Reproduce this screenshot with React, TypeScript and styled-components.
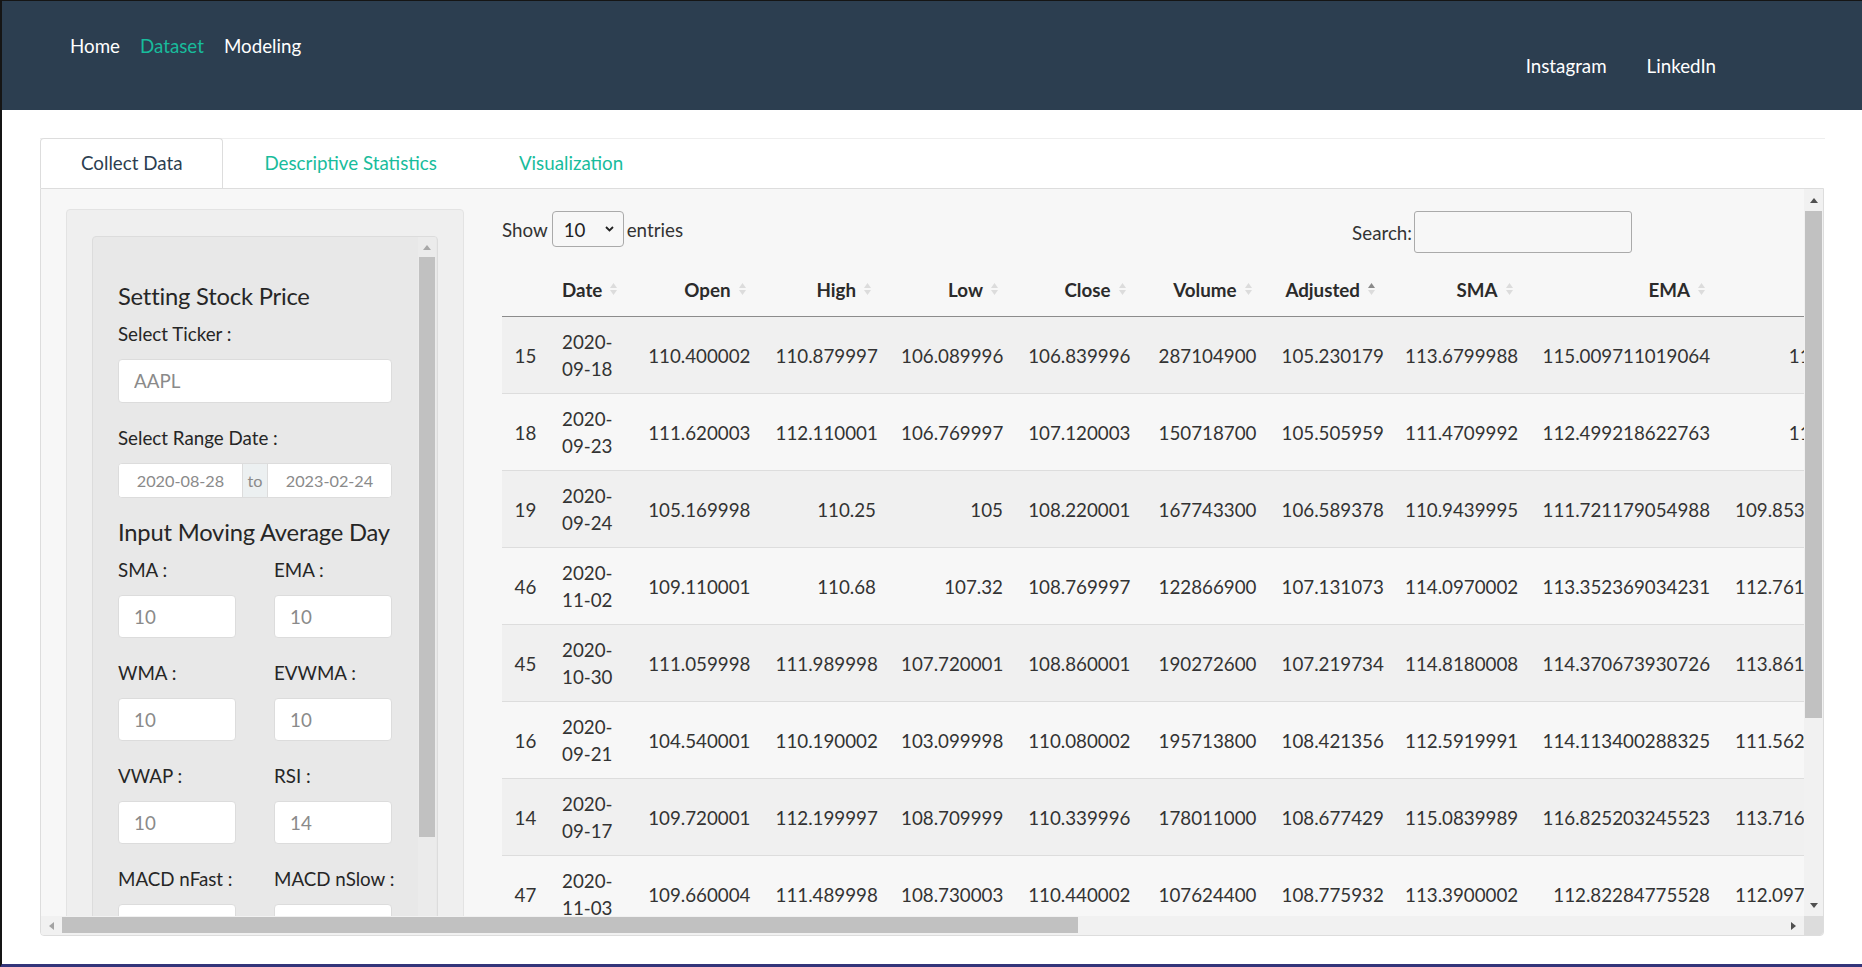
import * as React from "react";
import styled, { createGlobalStyle, css } from "styled-components";

const GlobalStyle = createGlobalStyle`
  html, body {
    margin: 0;
    padding: 0;
    background: #fff;
  }
  * {
    box-sizing: border-box;
  }
`;

const Frame = styled.div`
  width: 1862px;
  height: 967px;
  overflow: hidden;
  display: flex;
  flex-direction: column;
  background: #fff;
  border-left: 2px solid #151515;
  border-top: 1px solid #151515;
  border-bottom: 3px solid #34357a;
  font-family: Lato, "Open Sans", sans-serif;
  font-size: 18.75px;
  color: #333;
`;

const NavBar = styled.nav`
  height: 109px;
  flex-shrink: 0;
  background: #2c3e50;
  display: flex;
  justify-content: space-between;
  align-items: flex-start;
  padding: 0 126px 0 58px;
`;

const NavGroup = styled.div<{ $top: number }>`
  display: flex;
  padding-top: ${p => p.$top}px;
`;

const NavLink = styled.a<{ $active?: boolean; $pad: number }>`
  padding: 0 ${p => p.$pad}px;
  line-height: 27px;
  color: #fff;
  text-decoration: none;
  ${p =>
    p.$active &&
    css`
      color: #18bc9c;
    `}
`;

const Main = styled.main`
  padding: 0 37px 0 38px;
`;

const TabBar = styled.div`
  margin-top: 28px;
  height: 50px;
  border-top: 1px solid #eee;
  display: flex;
`;

const Tab = styled.div<{ $active?: boolean }>`
  height: 50px;
  margin-top: -1px;
  padding: 0 40px 2px;
  display: flex;
  align-items: center;
  border: 1px solid transparent;
  border-bottom: none;
  border-radius: 4px 4px 0 0;
  color: #18bc9c;
  ${p =>
    p.$active &&
    css`
      color: #2c3e50;
      background: #fff;
      border-color: #ddd;
    `}
`;

const Panel = styled.div`
  width: 1784px;
  height: 748px;
  border: 1px solid #ddd;
  border-radius: 0 0 4px 4px;
  background: #f7f7f7;
  display: flex;
  flex-direction: column;
  overflow: hidden;
`;

const ScrollArea = styled.div`
  display: flex;
  height: 727px;
`;

const Viewport = styled.div`
  flex: 1;
  overflow: hidden;
  display: flex;
  align-items: flex-start;
`;

/* ---------- drawn scrollbars ---------- */

const VBar = styled.div<{ $w: number; $track: string }>`
  width: ${p => p.$w}px;
  flex-shrink: 0;
  display: flex;
  flex-direction: column;
  background: ${p => p.$track};
`;

const HBar = styled.div`
  height: 19px;
  display: flex;
  background: #f1f1f1;
`;

const ArrowBox = styled.div<{ $w?: number; $h?: number }>`
  flex-shrink: 0;
  width: ${p => (p.$w ? `${p.$w}px` : "auto")};
  height: ${p => (p.$h ? `${p.$h}px` : "auto")};
  display: flex;
  align-items: center;
  justify-content: center;
`;

const VThumb = styled.div<{ $h: number }>`
  height: ${p => p.$h}px;
  margin: 0 1px;
  background: #c1c1c1;
`;

const HThumb = styled.div<{ $w: number }>`
  width: ${p => p.$w}px;
  margin: 1px 0 2px;
  background: #c1c1c1;
`;

const HTrack = styled.div`
  flex: 1;
  display: flex;
`;

const Corner = styled.div`
  width: 19px;
  background: #dcdcdc;
`;

const Arrow: React.FC<{ dir: "up" | "down" | "left" | "right"; color: string }> = ({ dir, color }) => {
  const pts = {
    up: "0,5 4,0 8,5",
    down: "0,0 8,0 4,5",
    left: "5,0 5,8 0,4",
    right: "0,0 5,4 0,8",
  }[dir];
  const horiz = dir === "left" || dir === "right";
  return (
    <svg width={horiz ? 5 : 8} height={horiz ? 8 : 5} viewBox={horiz ? "0 0 5 8" : "0 0 8 5"}>
      <polygon points={pts} fill={color} />
    </svg>
  );
};

/* ---------- sidebar ---------- */

const SideCol = styled.div`
  flex-shrink: 0;
  padding: 20px 0 0 25px;
`;

const Well = styled.div`
  width: 398px;
  padding: 26px 25px 40px;
  background: #efefef;
  border: 1px solid #e3e3e3;
  border-radius: 4px;
`;

const InnerBox = styled.div`
  height: 760px;
  display: flex;
  background: #e8e8e8;
  border: 1px solid #dcdcdc;
  border-radius: 4px;
  overflow: hidden;
`;

const Form = styled.div`
  width: 274px;
  flex-shrink: 0;
  margin: 0 26px 0 25px;
  padding-top: 46px;
`;

const SideHeading = styled.h4`
  margin: 0 0 11px;
  font-size: 23.75px;
  line-height: 26px;
  font-weight: 400;
  color: #262626;
  white-space: nowrap;
  letter-spacing: -0.2px;
`;

const FormGroup = styled.div`
  margin-bottom: 21.5px;
`;

const Label = styled.label`
  display: block;
  margin-bottom: 11.5px;
  line-height: 27px;
  color: #262626;
  white-space: nowrap;
`;

const TextInput = styled.input`
  display: block;
  width: 100%;
  height: 44px;
  padding: 0 15px;
  font: inherit;
  color: #8a8a8a;
  background: #fff;
  border: 1px solid #dcdcdc;
  border-radius: 4px;
  outline: none;
`;

const NumGrid = styled.div`
  display: grid;
  grid-template-columns: 118px 118px;
  column-gap: 38px;
`;

const NumInput = styled(TextInput)`
  height: 43px;
`;

const RangeBox = styled.div`
  display: flex;
  height: 35px;
  border-radius: 4px;
  overflow: hidden;
  border: 1px solid #dcdcdc;
  background: #fff;
`;

const DateInput = styled.input`
  flex: 1;
  min-width: 0;
  border: none;
  padding: 0;
  font: inherit;
  font-size: 16.25px;
  color: #8a8a8a;
  text-align: center;
  background: #fff;
  outline: none;
`;

const RangeAddon = styled.span`
  width: 26px;
  display: flex;
  align-items: center;
  justify-content: center;
  font-size: 16.25px;
  color: #8a8a8a;
  background: #ecf0f1;
  border-left: 1px solid #dcdcdc;
  border-right: 1px solid #dcdcdc;
`;

/* ---------- table ---------- */

const TableCol = styled.div`
  flex-shrink: 0;
  margin-left: 38px;
  padding-top: 22px;
`;

const Controls = styled.div`
  width: 1130px;
  height: 42px;
  display: flex;
  justify-content: space-between;
  align-items: flex-start;
`;

const Ctl = styled.div<{ $h: number }>`
  height: ${p => p.$h}px;
  display: flex;
  align-items: center;
`;

const LengthSelect = styled.div`
  width: 72px;
  height: 36px;
  margin: 0 3px 0 4px;
  padding: 0 9px 0 11px;
  display: flex;
  align-items: center;
  justify-content: space-between;
  border: 1px solid #aaa;
  border-radius: 4px;
  color: #222;
`;

const SearchBox = styled.div`
  width: 218px;
  height: 42px;
  margin-left: 2px;
  border: 1px solid #aaa;
  border-radius: 3px;
`;

const Table = styled.table<{ $width: number }>`
  margin-top: 13px;
  width: ${p => p.$width}px;
  table-layout: fixed;
  border-collapse: collapse;
`;

const Th = styled.th<{ $left?: boolean }>`
  padding: 9.5px 12.5px 13.5px;
  line-height: 27px;
  font-weight: 700;
  color: #2b2b2b;
  text-align: ${p => (p.$left ? "left" : "right")};
  border-bottom: 1px solid #8c8c8c;
  white-space: nowrap;
`;

const HeadInner = styled.span`
  display: inline-flex;
  align-items: center;
`;

const SortIcon = styled.svg`
  margin: 0 5px 0 8px;
  flex-shrink: 0;
`;

const Row = styled.tr<{ $striped: boolean }>`
  background: ${p => (p.$striped ? "#f0f0f0" : "transparent")};
  & + & {
    border-top: 1px solid #ddd;
  }
`;

const Td = styled.td<{ $left?: boolean }>`
  padding: 11px 12.5px;
  line-height: 27px;
  vertical-align: middle;
  text-align: ${p => (p.$left ? "left" : "right")};
  color: #333;
  white-space: ${p => (p.$left ? "normal" : "nowrap")};
`;

const Sort: React.FC<{ asc?: boolean }> = ({ asc }) => (
  <SortIcon width="7" height="14" viewBox="0 0 7 14">
    <polygon points="0,6 3.5,1 7,6" fill={asc ? "#8a8a8a" : "#dcdcdc"} />
    <polygon points="0,8 7,8 3.5,13" fill="#dcdcdc" />
  </SortIcon>
);

const columns: { name: string; width: number; left?: boolean; asc?: boolean }[] = [
  { name: "", width: 47.5, left: true },
  { name: "Date", width: 85, left: true },
  { name: "Open", width: 128.5 },
  { name: "High", width: 125.5 },
  { name: "Low", width: 127 },
  { name: "Close", width: 127.5 },
  { name: "Volume", width: 126 },
  { name: "Adjusted", width: 123.5, asc: true },
  { name: "SMA", width: 137.5 },
  { name: "EMA", width: 192.5 },
  { name: "WMA", width: 192 },
  { name: "EVWMA", width: 192 },
  { name: "VWAP", width: 150 },
  { name: "RSI", width: 150 },
];

const rows: string[][] = [
  ["15", "2020-09-18", "110.400002", "110.879997", "106.089996", "106.839996", "287104900", "105.230179", "113.6799988", "115.009711019064", "114.0636364", "114.391826194871", "111.205716", "38.4110252"],
  ["18", "2020-09-23", "111.620003", "112.110001", "106.769997", "107.120003", "150718700", "105.505959", "111.4709992", "112.499218622763", "112.7218182", "112.903712098127", "110.487105", "39.1284402"],
  ["19", "2020-09-24", "105.169998", "110.25", "105", "108.220001", "167743300", "106.589378", "110.9439995", "111.721179054988", "109.853454545455", "111.190275160023", "110.230142", "42.0159936"],
  ["46", "2020-11-02", "109.110001", "110.68", "107.32", "108.769997", "122866900", "107.131073", "114.0970002", "113.352369034231", "112.761090909091", "113.870046813215", "113.498014", "40.4487701"],
  ["45", "2020-10-30", "111.059998", "111.989998", "107.720001", "108.860001", "190272600", "107.219734", "114.8180008", "114.370673930726", "113.861454545455", "114.569710932118", "113.881075", "40.6715539"],
  ["16", "2020-09-21", "104.540001", "110.190002", "103.099998", "110.080002", "195713800", "108.421356", "112.5919991", "114.113400288325", "111.562181818182", "112.870127442016", "110.873510", "42.6401953"],
  ["14", "2020-09-17", "109.720001", "112.199997", "108.709999", "110.339996", "178011000", "108.677429", "115.0839989", "116.825203245523", "113.716363636364", "115.932115602849", "112.034408", "41.2279640"],
  ["47", "2020-11-03", "109.660004", "111.489998", "108.730003", "110.440002", "107624400", "108.775932", "113.3900002", "112.82284775528", "112.097454545455", "113.118502207611", "112.951037", "44.3302614"],
];

const tableWidth = columns.reduce((s, c) => s + c.width, 0);

const App: React.FC = () => {
  return (
    <>
      <GlobalStyle />
      <Frame>
        <NavBar>
          <NavGroup $top={30.5}>
            <NavLink $pad={10}>Home</NavLink>
            <NavLink $pad={10} $active>
              Dataset
            </NavLink>
            <NavLink $pad={10}>Modeling</NavLink>
          </NavGroup>
          <NavGroup $top={50.5}>
            <NavLink $pad={20}>Instagram</NavLink>
            <NavLink $pad={20}>LinkedIn</NavLink>
          </NavGroup>
        </NavBar>

        <Main>
          <TabBar>
            <Tab $active>Collect Data</Tab>
            <Tab>Descriptive Statistics</Tab>
            <Tab>Visualization</Tab>
          </TabBar>

          <Panel>
            <ScrollArea>
              <Viewport>
                <SideCol>
                  <Well>
                    <InnerBox>
                      <Form>
                        <SideHeading>Setting Stock Price</SideHeading>
                        <FormGroup>
                          <Label>Select Ticker :</Label>
                          <TextInput readOnly defaultValue="AAPL" />
                        </FormGroup>
                        <FormGroup>
                          <Label>Select Range Date :</Label>
                          <RangeBox>
                            <DateInput readOnly defaultValue="2020-08-28" />
                            <RangeAddon>to</RangeAddon>
                            <DateInput readOnly defaultValue="2023-02-24" />
                          </RangeBox>
                        </FormGroup>
                        <SideHeading>Input Moving Average Day</SideHeading>
                        <NumGrid>
                          {[
                            ["SMA :", "10"],
                            ["EMA :", "10"],
                            ["WMA :", "10"],
                            ["EVWMA :", "10"],
                            ["VWAP :", "10"],
                            ["RSI :", "14"],
                            ["MACD nFast :", "12"],
                            ["MACD nSlow :", "26"],
                            ["MACD nSig :", "9"],
                          ].map(([label, val]) => (
                            <FormGroup key={label}>
                              <Label>{label}</Label>
                              <NumInput readOnly defaultValue={val} />
                            </FormGroup>
                          ))}
                        </NumGrid>
                      </Form>
                      <VBar $w={18} $track="#ebebeb" style={{ marginRight: 1 }}>
                        <ArrowBox $h={20}>
                          <Arrow dir="up" color="#a8a8a8" />
                        </ArrowBox>
                        <VThumb $h={580} />
                      </VBar>
                    </InnerBox>
                  </Well>
                </SideCol>

                <TableCol>
                  <Controls>
                    <Ctl $h={36}>
                      Show
                      <LengthSelect>
                        10
                        <svg width="9" height="6" viewBox="0 0 9 6">
                          <polyline points="1,1 4.5,4.5 8,1" fill="none" stroke="#222" strokeWidth="1.8" />
                        </svg>
                      </LengthSelect>
                      entries
                    </Ctl>
                    <Ctl $h={42}>
                      Search:
                      <SearchBox />
                    </Ctl>
                  </Controls>

                  <Table $width={tableWidth}>
                    <colgroup>
                      {columns.map((c, i) => (
                        <col key={i} style={{ width: c.width }} />
                      ))}
                    </colgroup>
                    <thead>
                      <tr>
                        {columns.map((c, i) => (
                          <Th key={i} $left={c.left}>
                            {c.name && (
                              <HeadInner>
                                {c.name}
                                <Sort asc={c.asc} />
                              </HeadInner>
                            )}
                          </Th>
                        ))}
                      </tr>
                    </thead>
                    <tbody>
                      {rows.map((r, ri) => (
                        <Row key={ri} $striped={ri % 2 === 0}>
                          {r.map((v, ci) => (
                            <Td key={ci} $left={columns[ci].left}>
                              {v}
                            </Td>
                          ))}
                        </Row>
                      ))}
                    </tbody>
                  </Table>
                </TableCol>
              </Viewport>

              <VBar $w={19} $track="#f1f1f1">
                <ArrowBox $h={22}>
                  <Arrow dir="up" color="#505050" />
                </ArrowBox>
                <VThumb $h={507} />
                <div style={{ flex: 1 }} />
                <ArrowBox $h={21}>
                  <Arrow dir="down" color="#505050" />
                </ArrowBox>
              </VBar>
            </ScrollArea>

            <HBar>
              <ArrowBox $w={21}>
                <Arrow dir="left" color="#a3a3a3" />
              </ArrowBox>
              <HTrack>
                <HThumb $w={1016} />
              </HTrack>
              <ArrowBox $w={21}>
                <Arrow dir="right" color="#505050" />
              </ArrowBox>
              <Corner />
            </HBar>
          </Panel>
        </Main>
      </Frame>
    </>
  );
};

export default App;
